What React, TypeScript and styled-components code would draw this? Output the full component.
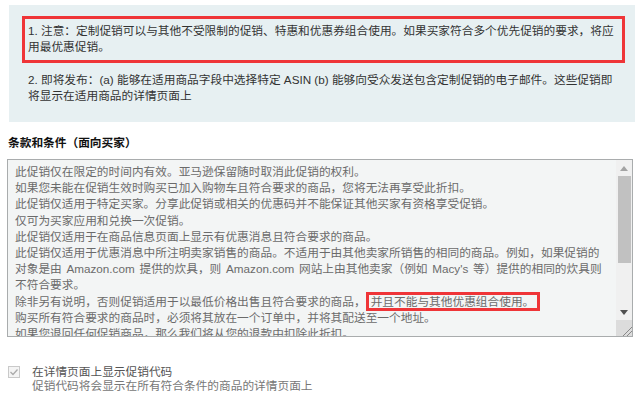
import React from "react";
import styled, { createGlobalStyle } from "styled-components";

const Global = createGlobalStyle`
  html, body { margin: 0; padding: 0; background: #fff; }
  body {
    font-family: "Liberation Sans", "Noto Sans CJK SC", sans-serif;
    font-size: 11.7px;
    color: #333;
  }
  * { box-sizing: border-box; }
`;

const Page = styled.div`
  width: 639px;
  padding: 5px 4px 0 7px;
  display: flex;
  flex-direction: column;
`;

const NoticePanel = styled.div`
  margin-left: 2px;
  background: #e7f0f2;
  padding: 11px 10px 18px 13px;
  display: flex;
  flex-direction: column;
  gap: 9px;
`;

const NoticeText = styled.p<{ $highlight?: boolean }>`
  margin: 0;
  line-height: 16px;
  color: #333;
  padding: ${(p) => (p.$highlight ? "4px 3px 5px 3px" : "0 3px 0 6px")};
  border: ${(p) => (p.$highlight ? "3px solid #ef3538" : "none")};
`;

const Heading = styled.h3`
  margin: 13px 0 0 1px;
  font-size: 11.7px;
  line-height: 16px;
  font-weight: bold;
  color: #111;
`;

const TermsBox = styled.div`
  margin-top: 8px;
  height: 178px;
  width: 626px;
  border: 1px solid #a9acad;
  background: #f3f5f5;
  display: flex;
  overflow: hidden;
`;

const TermsContent = styled.div`
  flex: 1;
  padding: 4px 12px 0 7px;
  color: #6b6b6b;
  line-height: 16.2px;
  word-spacing: 1.5px;
  overflow: hidden;
`;

const TermsLine = styled.div``;

const NoBreak = styled.span`
  white-space: nowrap;
`;

const Highlight = styled.span`
  border: 3px solid #ef3538;
  padding: 0 3px 0 2px;
`;

const ScrollBar = styled.div`
  width: 16px;
  background: #f0f0f0;
  display: flex;
  flex-direction: column;
`;

const ScrollButton = styled.div`
  height: 16px;
  display: flex;
  align-items: center;
  justify-content: center;
`;

const Thumb = styled.div`
  height: 87px;
  margin: 0 1px 0 2px;
  background: #c1c1c1;
`;

const Track = styled.div`
  flex: 1;
`;

const Corner = styled.div`
  height: 16px;
  background: #dcdcdc;
  display: flex;
  align-items: flex-end;
  justify-content: flex-end;
`;

const OptionRow = styled.label`
  margin-top: 28px;
  margin-left: 1px;
  display: flex;
  gap: 12px;
  align-items: flex-start;
`;

const Box = styled.span`
  width: 12px;
  height: 12px;
  margin-top: 1px;
  border: 1px solid #c9c9c9;
  background: #f4f4f4;
  display: flex;
  align-items: center;
  justify-content: center;
`;

const OptionText = styled.div`
  display: flex;
  flex-direction: column;
`;

const OptionLabel = styled.span`
  line-height: 14px;
  color: #555;
`;

const OptionHint = styled.span`
  line-height: 14px;
  color: #777;
`;

const Arrow = ({ up, color }: { up?: boolean; color: string }) => (
  <svg width="8" height="5" viewBox="0 0 8 5">
    <polygon points={up ? "0,5 8,5 4,0" : "0,0 8,0 4,5"} fill={color} />
  </svg>
);

const Grip = () => (
  <svg width="12" height="12" viewBox="0 0 12 12">
    <line x1="3" y1="12" x2="12" y2="3" stroke="#888" strokeWidth="1" />
    <line x1="7" y1="12" x2="12" y2="7" stroke="#888" strokeWidth="1" />
  </svg>
);

const Check = () => (
  <svg width="10" height="10" viewBox="0 0 10 10">
    <polyline points="1.5,5 4,7.5 8.5,2.5" fill="none" stroke="#aaa" strokeWidth="1.3" />
  </svg>
);

export default function App() {
  return (
    <>
      <Global />
      <Page>
        <NoticePanel>
          <NoticeText $highlight>
            1. 注意：定制促销可以与其他不受限制的促销、特惠和优惠券组合使用。如果买家符合多个优先促销的要求，将应用最优惠促销。
          </NoticeText>
          <NoticeText>
            2. 即将发布：(a) 能够在适用商品字段中选择特定 ASIN (b) 能够向受众发送包含定制促销的电子邮件。这些促销即将显示在适用商品的详情页面上
          </NoticeText>
        </NoticePanel>
        <Heading>条款和条件（面向买家）</Heading>
        <TermsBox>
          <TermsContent>
            <TermsLine>此促销仅在限定的时间内有效。亚马逊保留随时取消此促销的权利。</TermsLine>
            <TermsLine>如果您未能在促销生效时购买已加入购物车且符合要求的商品，您将无法再享受此折扣。</TermsLine>
            <TermsLine>此促销仅适用于特定买家。分享此促销或相关的优惠码并不能保证其他买家有资格享受促销。</TermsLine>
            <TermsLine>仅可为买家应用和兑换一次促销。</TermsLine>
            <TermsLine>此促销仅适用于在商品信息页面上显示有优惠消息且符合要求的商品。</TermsLine>
            <TermsLine>
              此促销仅适用于优惠消息中所注明卖家销售的商品。不适用于由其他卖家所销售的相同的商品。例如，如果促销的对象是由 Amazon.com 提供的炊具，则 Amazon.com 网站上由其他卖家（例如 Macy's 等）提供的相同的炊具则<NoBreak>不符合要求。</NoBreak>
            </TermsLine>
            <TermsLine>
              除非另有说明，否则促销适用于以最低价格出售且符合要求的商品，<Highlight>并且不能与其他优惠组合使用。</Highlight>
            </TermsLine>
            <TermsLine>购买所有符合要求的商品时，必须将其放在一个订单中，并将其配送至一个地址。</TermsLine>
            <TermsLine>如果您退回任何促销商品，那么我们将从您的退款中扣除此折扣。</TermsLine>
          </TermsContent>
          <ScrollBar>
            <ScrollButton>
              <Arrow up color="#a3a3a3" />
            </ScrollButton>
            <Thumb />
            <Track />
            <ScrollButton>
              <Arrow color="#505050" />
            </ScrollButton>
            <Corner>
              <Grip />
            </Corner>
          </ScrollBar>
        </TermsBox>
        <OptionRow>
          <Box>
            <Check />
          </Box>
          <OptionText>
            <OptionLabel>在详情页面上显示促销代码</OptionLabel>
            <OptionHint>促销代码将会显示在所有符合条件的商品的详情页面上</OptionHint>
          </OptionText>
        </OptionRow>
      </Page>
    </>
  );
}
